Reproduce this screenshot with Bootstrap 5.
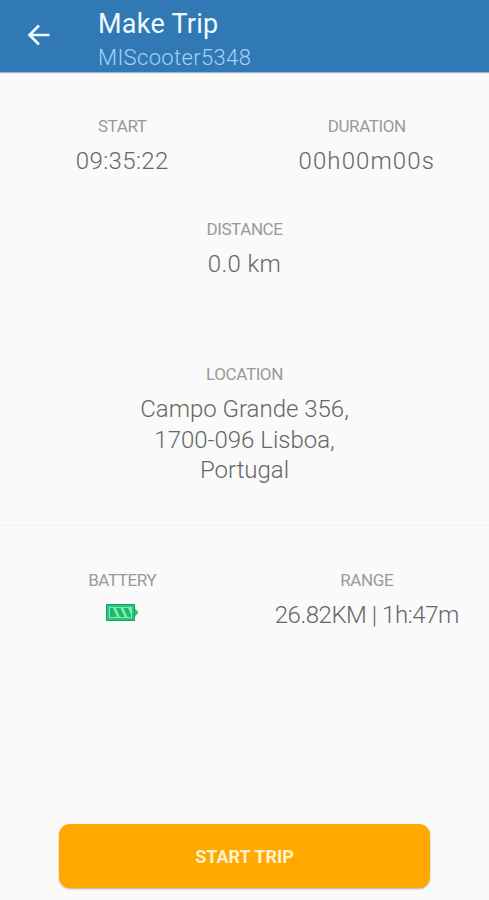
<!DOCTYPE html>
<html lang="en">
<head>
<meta charset="utf-8">
<meta name="viewport" content="width=device-width, initial-scale=1">
<title>Make Trip</title>
<link href="https://cdn.jsdelivr.net/npm/bootstrap@5.3.0/dist/css/bootstrap.min.css" rel="stylesheet">
<style>
body{font-family:Roboto,"Liberation Sans",sans-serif;background:#fafafa;color:#666;height:900px;overflow:hidden}
.appbar{height:72px;background:#3079b5;box-shadow:0 1px 1px rgba(60,120,170,.5)}
.back{width:98px;padding:23px 0 0 26px;line-height:0}
.ttl{font-size:27px;line-height:32px;margin-top:8px;color:#effaff;letter-spacing:.25px}
.sub{font-size:22px;line-height:30px;margin-top:3px;color:#a5d2f5;font-weight:300;letter-spacing:.35px}
.lbl{font-size:17px;line-height:20px;color:#999;margin-bottom:10px;letter-spacing:-.4px}
.val{font-size:24px;line-height:30.5px;font-weight:300;white-space:nowrap}
.clock{letter-spacing:.35px}
.elapsed{letter-spacing:1.1px}
.reach{letter-spacing:-.45px}
.times{padding-top:44px;height:147px}
.dist{height:145px}
.loc{height:162px;border-bottom:1px solid #f1f1f1}
.power{padding-top:44px;height:298px}
.cell-icon{margin:13px auto 0}
.start{width:371px;height:64px;border-radius:11px;background:#ffa800;color:#fff3cb;font-size:18px;font-weight:700;box-shadow:0 1px 2px rgba(90,70,20,.4)}
.start:hover{background:#f5a000;color:#fff}
</style>
<script src="https://cdn.jsdelivr.net/npm/bootstrap@5.3.0/dist/js/bootstrap.bundle.min.js" defer></script>
</head>
<body>
<header class="appbar d-flex">
  <a class="back" href="#" aria-label="Back"><svg width="26" height="24" viewBox="0 0 26 24" fill="none" stroke="#effaff" stroke-width="2.6"><path d="M23.500 12H4M13 2.500 3.500 12l9.500 9.500"/></svg></a>
  <div><h1 class="ttl fw-normal mb-0">Make Trip</h1><div class="sub">MIScooter5348</div></div>
</header>
<main class="text-center">
  <section class="row g-0 times">
    <div class="col-6"><div class="lbl">START</div><div class="val clock">09:35:22</div></div>
    <div class="col-6"><div class="lbl">DURATION</div><div class="val elapsed">00h00m00s</div></div>
  </section>
  <section class="dist"><div class="lbl">DISTANCE</div><div class="val clock">0.0 km</div></section>
  <section class="loc"><div class="lbl">LOCATION</div><div class="val">Campo Grande 356,<br>1700-096 Lisboa,<br>Portugal</div></section>
  <section class="row g-0 power">
    <div class="col-6"><div class="lbl">BATTERY</div>
      <svg class="d-block cell-icon" width="34" height="19" viewBox="0 0 34 19"><path d="M1 1h29v4.500l3.500 4-3.500 4V18H1z" fill="#24c979"/><path d="M1.500 1.500h28v16h-28z" fill="none" stroke="#219d62"/><path d="M4 4h23v11H4z" fill="#7deab3"/><path d="M5 5h3l4 9H5zM11 5h4.500l4 9H15zM18.500 5H23l3 7v2h-3.500z" fill="#20b969"/></svg>
    </div>
    <div class="col-6"><div class="lbl">RANGE</div><div class="val reach">26.82KM | 1h:47m</div></div>
  </section>
  <button class="btn start border-0 p-0" type="button">START TRIP</button>
</main>
</body>
</html>
